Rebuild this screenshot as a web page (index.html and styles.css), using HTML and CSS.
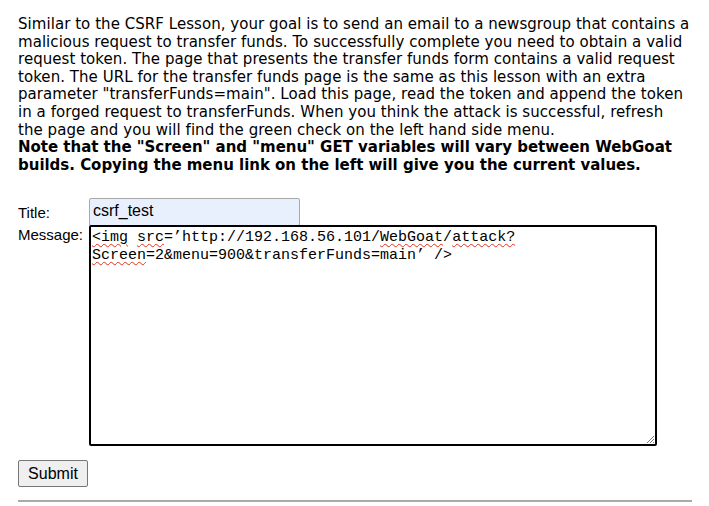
FILE: index.html
```html
<!DOCTYPE html>
<html>
<head>
<meta charset="utf-8">
<link rel="stylesheet" href="styles.css">
</head>
<body>
<div class="lesson">
  <p class="intro">Similar to the CSRF Lesson, your goal is to send an email to a newsgroup that contains a<br>malicious request to transfer funds. To successfully complete you need to obtain a valid<br>request token. The page that presents the transfer funds form contains a valid request<br>token. The URL for the transfer funds page is the same as this lesson with an extra<br>parameter "transferFunds=main". Load this page, read the token and append the token<br>in a forged request to transferFunds. When you think the attack is successful, refresh<br>the page and you will find the green check on the left hand side menu.<br><b class="note">Note that the "Screen" and "menu" GET variables will vary between WebGoat<br>builds. Copying the menu link on the left will give you the current values.</b></p>
  <form class="form">
    <div class="row">
      <span class="label">Title:</span>
      <div class="title-input">csrf_test</div>
    </div>
    <div class="row">
      <span class="label">Message:</span>
      <div class="message"><span class="sp">&lt;img</span> <span class="sp">src</span>=’http://192.168.56.101/<span class="sp">WebGoat</span>/<span class="sp">attack?</span><br><span class="sp">Screen</span>=2&amp;menu=900&amp;transferFunds=main’ /&gt;<svg class="grip" width="10" height="10" viewBox="0 0 10 10"><path d="M9 2 L2 9 M9 5 L5 9 M9 8 L8 9" stroke="#777" stroke-width="1"/></svg></div>
    </div>
    <div class="submit">Submit</div>
  </form>
  <div class="rule"></div>
</div>
</body>
</html>
```
FILE: styles.css
```css
html, body { margin: 0; padding: 0; background: #fff; }
body { padding: 8px; }
.lesson { padding: 0 10px; }
.intro {
  margin: 0;
  padding-top: 8px;
  font-family: "DejaVu Sans", Verdana, sans-serif;
  font-size: 15px;
  letter-spacing: 0.05px;
  line-height: 17.6px;
  color: #000;
  white-space: nowrap;
}
.note { letter-spacing: -0.02px; }
.form { margin-top: 24px; font-family: "Liberation Sans", Arial, sans-serif; font-size: 15px; }
.row { display: flex; align-items: flex-start; }
.label { width: 71px; color: #000; }
.row:first-child .label { padding-top: 6px; }
.row:nth-child(2) .label { padding-top: 0; }
.title-input {
  box-sizing: border-box;
  width: 211px;
  height: 28px;
  background: #e8f0fe;
  border: 1px solid #a9a9a9;
  border-radius: 2px;
  padding: 3px 3px 0 3px;
  font-size: 16px;
  color: #000;
}
.message {
  position: relative;
  box-sizing: border-box;
  width: 568px;
  height: 221px;
  margin-top: -1px;
  border: 2px solid #000;
  border-radius: 2px;
  padding: 2px 1px;
  font-family: "Liberation Mono", monospace;
  font-size: 15px;
  line-height: 18px;
  color: #000;
  white-space: nowrap;
}
.sp { text-decoration: underline wavy #e0301e; text-decoration-thickness: 1px; text-underline-offset: 2px; }
.grip { position: absolute; right: 0; bottom: 0; }
.submit {
  display: inline-block;
  margin-top: 14px;
  box-sizing: border-box;
  height: 27px;
  width: 70px;
  text-align: center;
  line-height: 25px;
  font-size: 16px;
  background: #efefef;
  border: 1px solid #767676;
  border-radius: 2px;
  color: #000;
}
.rule { margin-top: 13px; height: 0; border-top: 2px solid #aaa; width: 674px; }
```
